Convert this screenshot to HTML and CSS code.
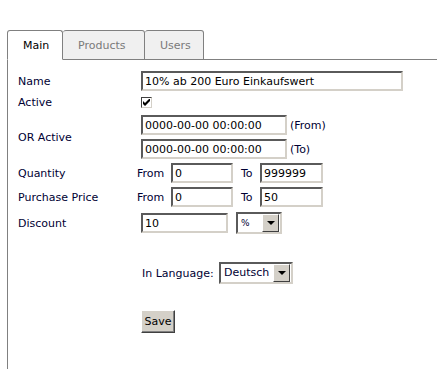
FILE: index.html
```html
<!doctype html>
<html lang="de">
    <head>
        <meta charset="UTF-8">
        <title>Discount</title>
        <link rel="stylesheet" href="styles.css">
    </head>
    <body>
        <div class="tabs">
            <div class="tab tab--active">Main</div>
            <div class="tab tab--products">Products</div>
            <div class="tab tab--users">Users</div>
            <div class="tabs__rest"></div>
        </div>

        <div class="panel">
            <div class="row row--name">
                <span class="label">Name</span>
                <div class="cell">
                    <input class="text text--name" type="text" value="10% ab 200 Euro Einkaufswert">
                </div>
            </div>

            <div class="row row--active">
                <span class="label">Active</span>
                <div class="cell">
                    <span class="checkbox">
                        <svg width="7" height="7" viewBox="0 0 7 7">
                            <path d="M0 2 L2 4 L7 -1 L7 2 L2 7 L0 5 Z" fill="#000"/>
                        </svg>
                    </span>
                </div>
            </div>

            <div class="row row--dates">
                <span class="label">OR Active</span>
                <div class="cell dates">
                    <div class="date">
                        <input class="text text--date" type="text" value="0000-00-00 00:00:00">
                        <span class="note">(From)</span>
                    </div>
                    <div class="date">
                        <input class="text text--date" type="text" value="0000-00-00 00:00:00">
                        <span class="note">(To)</span>
                    </div>
                </div>
            </div>

            <div class="row row--range">
                <span class="label">Quantity</span>
                <div class="range">
                    <span class="range__from">From</span>
                    <input class="text text--from" type="text" value="0">
                    <span class="range__to">To</span>
                    <input class="text text--to" type="text" value="999999">
                </div>
            </div>

            <div class="row row--range">
                <span class="label">Purchase Price</span>
                <div class="range">
                    <span class="range__from">From</span>
                    <input class="text text--from" type="text" value="0">
                    <span class="range__to">To</span>
                    <input class="text text--to" type="text" value="50">
                </div>
            </div>

            <div class="row row--discount">
                <span class="label">Discount</span>
                <div class="cell discount">
                    <input class="text text--discount" type="text" value="10">
                    <div class="select select--unit">
                        <span class="select__value select__value--small">%</span>
                        <span class="select__btn"><span class="arrow"></span></span>
                    </div>
                </div>
            </div>

            <div class="row row--lang">
                <span class="label"></span>
                <div class="cell lang">
                    <span class="lang__label">In Language:</span>
                    <div class="select select--lang">
                        <span class="select__value">Deutsch</span>
                        <span class="select__btn"><span class="arrow"></span></span>
                    </div>
                </div>
            </div>

            <div class="row row--save">
                <span class="label"></span>
                <div class="cell">
                    <button class="btn" type="button">Save</button>
                </div>
            </div>
        </div>
    </body>
</html>
```

FILE: styles.css
```css
/* base */
*,
*::before,
*::after {
    box-sizing: border-box;
    padding: 0;
    margin: 0;
}

html,
body {
    overflow: hidden;
}

body {
    font-family: "DejaVu Sans", sans-serif;
    font-size: 11px;
    line-height: 14px;
    color: #000033;
    background-color: #fff;
}

/* tabs */
.tabs {
    display: flex;
    padding-block-start: 30px;
    padding-inline-start: 7px;
}

.tab {
    block-size: 30px;
    padding-inline-start: 15px;
    line-height: 29px;
    color: #7a7a7a;
    background-color: #f0f0f0;
    border: 1px solid #808080;
    border-inline-start: 0;
    border-radius: 3px 3px 0 0;
}

.tab--active {
    inline-size: 56px;
    color: #000;
    background-color: #fff;
    border-inline-start: 1px solid #808080;
    border-block-end-color: #fff;
}

.tab--products {
    inline-size: 82px;
}

.tab--users {
    inline-size: 59px;
}

.tabs__rest {
    flex: 1;
    border-block-end: 1px solid #808080;
}

/* panel */
.panel {
    display: flex;
    flex-direction: column;
    min-block-size: 320px;
    margin-inline-start: 7px;
    padding: 11px 0 0 10px;
    border-inline-start: 1px solid #808080;
}

.row {
    display: grid;
    grid-template-columns: 119px 1fr;
    align-items: center;
}

/* text sits a little low next to the fields */
.label,
.note,
.range__from,
.range__to,
.lang__label {
    padding-block-start: 2px;
}

.row--active {
    margin-block-start: 3px;
}

.row--dates {
    margin-block-start: 5px;
}

.row--range {
    margin-block-start: 4px;
}

.row--discount {
    margin-block-start: 5px;
}

.row--lang {
    margin-block-start: 28px;
}

.row--save {
    margin-block-start: 26px;
}

.cell {
    padding-inline-start: 4px;
}

/* controls */
.text {
    display: block;
    block-size: 20px;
    padding: 0 2px;
    font-family: inherit;
    font-size: 11px;
    color: #000;
    background-color: #fff;
    border: 2px solid;
    border-color: #5a5a5a #d4d0c8 #d4d0c8 #5a5a5a;
    outline: 0;
}

.text--name {
    inline-size: 262px;
}

.text--date {
    inline-size: 146px;
}

.text--from {
    inline-size: 62px;
}

.text--to {
    inline-size: 63px;
}

.text--discount {
    inline-size: 87px;
}

.checkbox {
    display: flex;
    align-items: center;
    justify-content: center;
    inline-size: 11px;
    block-size: 11px;
    background-color: #fff;
    border: 1px solid;
    border-color: #404040 #d4d0c8 #d4d0c8 #404040;
}

.dates {
    display: flex;
    flex-direction: column;
    gap: 4px;
}

.date {
    display: flex;
    align-items: center;
    gap: 3px;
}

.range {
    display: flex;
    align-items: center;
}

.range__from {
    inline-size: 34px;
}

.range__to {
    inline-size: 27px;
    padding-inline-start: 8px;
}

.discount {
    display: flex;
    align-items: center;
    gap: 8px;
}

.lang {
    display: flex;
    align-items: center;
    padding-inline-start: 5px;
}

.lang__label {
    inline-size: 77px;
}

/* select */
.select {
    display: flex;
    align-items: center;
    block-size: 22px;
    padding: 0 1px 0 3px;
    background-color: #fff;
    border: 2px solid;
    border-color: #5a5a5a #d4d0c8 #d4d0c8 #5a5a5a;
}

.select--unit {
    inline-size: 46px;
}

.select--lang {
    inline-size: 74px;
    color: #000033;
}

.select__value {
    flex: 1;
    font-size: 11px;
}

.select__value--small {
    font-size: 9px;
}

.select__btn {
    display: flex;
    align-items: center;
    justify-content: center;
    inline-size: 17px;
    block-size: 18px;
    background-color: #d4d0c8;
    border: 1px solid;
    border-color: #fff #404040 #404040 #fff;
}

.arrow {
    border-block-start: 4px solid #000;
    border-inline: 4px solid transparent;
}

/* button */
.btn {
    inline-size: 34px;
    block-size: 23px;
    font-family: inherit;
    font-size: 11px;
    color: #000;
    background-color: #d4d0c8;
    border: 1px solid;
    border-color: #fff #404040 #404040 #fff;
    box-shadow: inset -1px -1px 0 #808080;
}
```
